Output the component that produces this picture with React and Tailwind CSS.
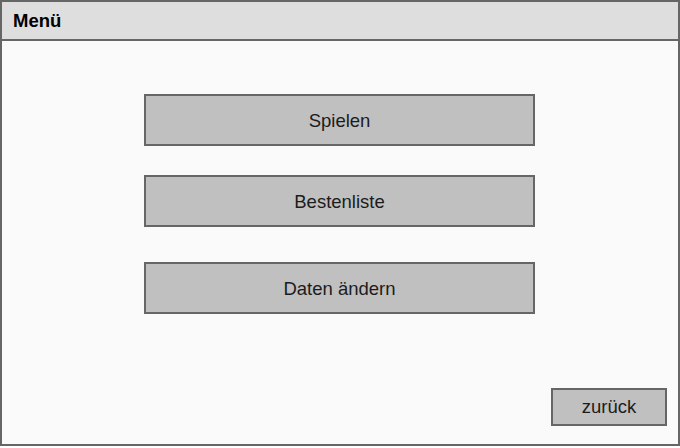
export default function App() {
  const btn =
    "w-[391px] h-[52px] ml-[142px] border-2 border-[#666666] bg-[#c0c0c0] text-[18.5px] text-[#1c1c1c] flex items-center justify-center pt-[1px]";

  return (
    <div
      className="w-[680px] h-[446px] border-2 border-[#666666] bg-[#fafafa] flex flex-col"
      style={{ fontFamily: '"Liberation Sans", Arial, sans-serif' }}
    >
      {/* Header */}
      <div className="h-[39px] shrink-0 border-b-2 border-[#666666] bg-[#dedede] flex items-center px-[11px]">
        <span className="text-[18.5px] font-bold text-black">Menü</span>
      </div>

      {/* Content */}
      <div className="flex-1 flex flex-col pt-[53px] pb-[18px]">
        <div className={btn}>Spielen</div>
        <div className={`${btn} mt-[29px]`}>Bestenliste</div>
        <div className={`${btn} mt-[35px]`}>Daten ändern</div>
        <div className="flex-1" />
        <div className="flex justify-end pr-[11px]">
          <div className="w-[116px] h-[38px] border-2 border-[#666666] bg-[#c0c0c0] text-[18.5px] text-[#1c1c1c] flex items-center justify-center">
            zurück
          </div>
        </div>
      </div>
    </div>
  );
}
